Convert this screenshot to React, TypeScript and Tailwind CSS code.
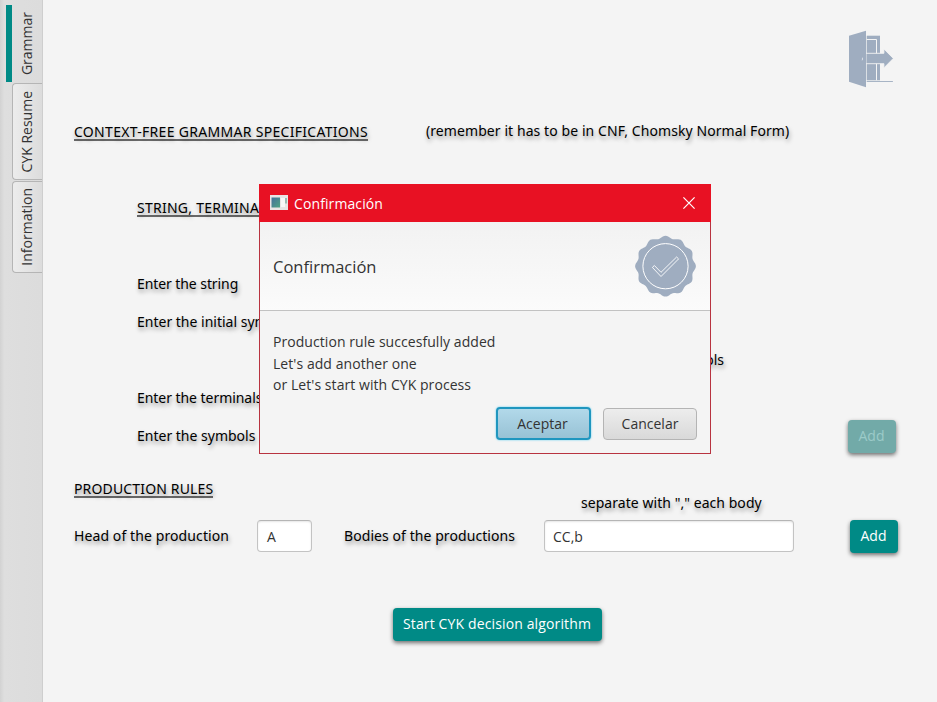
import type { ReactNode } from "react";

function Label({ children, className = "" }: { children: ReactNode; className?: string }) {
  return (
    <span
      className={`whitespace-nowrap font-['Noto_Sans',sans-serif] text-black [text-shadow:1px_3px_4px_rgba(0,0,0,0.4)] ${className}`}
    >
      {children}
    </span>
  );
}

function Heading({ children, className = "" }: { children: ReactNode; className?: string }) {
  return (
    <Label className={className}>
      <span className="inline-block h-[18px] border-b-2 border-[#6a6a6a] leading-[18px]">{children}</span>
    </Label>
  );
}

function Tab({ children, className }: { children: ReactNode; className: string }) {
  return (
    <div className={`flex items-center justify-center pr-0.5 ${className}`}>
      <span className="rotate-180 whitespace-nowrap text-[#333] [writing-mode:vertical-rl]">{children}</span>
    </div>
  );
}

function TealButton({ children, className }: { children: ReactNode; className: string }) {
  return (
    <button
      className={`flex h-[33px] items-center justify-center whitespace-nowrap rounded pb-0.5 pr-px shadow-[0_2px_4px_rgba(0,0,0,0.55)] ${className}`}
    >
      {children}
    </button>
  );
}

function DoorIcon() {
  return (
    <svg width="48" height="60" viewBox="0 0 48 60" fill="#9fadc0">
      <path d="M18.7 5.7H32V50.3H18.7z" />
      <path d="M18.7 9.5H28.5V50.3" fill="none" stroke="#f4f4f4" />
      <path d="M18 23.3h17.9V19l9.4 9.4-9.4 9.5v-4.2H18z" stroke="#f4f4f4" strokeWidth="0.9" />
      <path d="M1 5.7 18 .8v56.5L1 51.7z" />
      <path d="M18.7 51h26.2v.9H18.7z" />
      <path d="M14 27q1.6 2-.1 4z" fill="#fff" />
    </svg>
  );
}

const sealPoints = Array.from({ length: 144 }, (_, i) => {
  const a = (i / 144) * Math.PI * 2;
  const r = 29.2 + 1.2 * Math.cos(12 * a);
  return `${(31.5 + r * Math.sin(a)).toFixed(2)},${(31.2 - r * Math.cos(a)).toFixed(2)}`;
}).join(" ");

function SealIcon() {
  return (
    <svg width="63" height="63" viewBox="0 0 63 63">
      <polygon points={sealPoints} fill="#9fadc0" />
      <g fill="none" stroke="#fff">
        <circle cx="31.5" cy="31.2" r="22.6" strokeWidth="1" />
        <path d="M18.4 32.4l2-1.9 6.6 6.8L42.6 22l2 1.9L27 41.5z" strokeWidth="0.9" strokeLinejoin="round" />
      </g>
    </svg>
  );
}

function ConfirmDialog() {
  return (
    <div className="absolute left-[259px] top-[184px] flex h-[270px] w-[452px] flex-col border border-[#b83340] bg-[#f4f4f4] text-[#333]">
      <div className="-mx-px -mt-px flex h-[38px] shrink-0 items-center bg-[#e81123] pl-[11px] pr-4 text-white">
        <svg width="18" height="15" viewBox="0 0 18 15" className="-mt-0.5">
          <defs>
            <linearGradient id="app" x1="0" y1="0" x2="1" y2="1">
              <stop offset="0" stopColor="#44709a" />
              <stop offset="1" stopColor="#4ea384" />
            </linearGradient>
          </defs>
          <path d="M0 0h18v15H0z" fill="#e9e4e4" />
          <path d="M1.5 2.5h8.5v10H1.5z" fill="url(#app)" />
          <path d="M11 3h4v9h-4z" fill="#f8f8f8" />
          <path d="M15.5 3h1v5.5h-1z" fill="#4c9280" />
        </svg>
        <span className="ml-1.5 flex-1 pt-0.5 leading-5 tracking-[0.1px]">Confirmación</span>
        <svg width="12" height="12" viewBox="0 0 12 12" stroke="#fff" strokeWidth="1.2">
          <path d="M.4.4l11.2 11.2M11.6.4L.4 11.6" />
        </svg>
      </div>
      <div className="flex h-[89px] shrink-0 items-center justify-between border-b border-[#c2c2c2] bg-linear-to-b from-[#f2f2f2] to-[#fbfbfb] px-[13px]">
        <span className="pt-0.5 text-[16.5px]">Confirmación</span>
        <SealIcon />
      </div>
      <div className="pl-[13px] pt-5 leading-[21.5px] tracking-[0.06px]">
        <p>Production rule succesfully added</p>
        <p>Let's add another one</p>
        <p>or Let's start with CYK process</p>
      </div>
      <div className="mt-auto flex justify-end gap-3 pb-[13px] pr-[13px]">
        <button className="h-[33px] w-[95px] rounded border-2 border-[#1f96bf] bg-linear-to-b from-[#b2d9ea] to-[#98c2d5] pr-0.5 shadow-[0_0_2px_#4cc8f0]">
          Aceptar
        </button>
        <button className="mt-px h-8 w-[94px] rounded border border-[#b4b4b4] bg-linear-to-b from-[#ededed] to-[#d9d9d9] pb-0.5">
          Cancelar
        </button>
      </div>
    </div>
  );
}

export default function App() {
  return (
    <div className="relative flex h-[702px] w-[937px] overflow-hidden bg-[#f4f4f4] font-['Open_Sans',sans-serif] text-[14px]">
      <nav className="flex w-[43px] shrink-0 flex-col border-r border-[#cecece] bg-linear-to-r from-[#d2d2d2] via-[#dedede] via-10% to-[#dcdcdc] pt-[5px]">
        <Tab className="ml-1.5 h-[77px] border-l-[6px] border-[#008a86]">Grammar</Tab>
        <Tab className="ml-3 mt-px h-[97px] rounded-l border border-r-0 border-[#b5b5b5] bg-linear-to-r from-[#ececec] to-[#dcdcdc]">
          CYK Resume
        </Tab>
        <Tab className="ml-3 mt-px h-[92px] rounded-l border border-r-0 border-[#b5b5b5] bg-linear-to-r from-[#ececec] to-[#dcdcdc]">
          Information
        </Tab>
      </nav>
      <main className="flex min-w-0 flex-1 flex-col pl-[31px]">
        <div className="flex h-[112px] shrink-0 justify-end pr-[41px] pt-[30px]">
          <DoorIcon />
        </div>
        <div className="flex h-[38px] shrink-0 items-center">
          <Heading className="w-[352px] tracking-[0.3px]">CONTEXT-FREE GRAMMAR SPECIFICATIONS</Heading>
          <Label className="pb-0.5 tracking-[0.08px]">(remember it has to be in CNF, Chomsky Normal Form)</Label>
        </div>
        <div className="mt-[38px] flex h-[38px] shrink-0 items-center pl-[63px]">
          <Heading className="tracking-[0.25px]">STRING, TERMINALS</Heading>
        </div>
        <div className="mt-[38px] flex h-[38px] shrink-0 items-center pl-[63px]">
          <Label className="tracking-[-0.08px]">Enter the string</Label>
        </div>
        <div className="flex h-[38px] shrink-0 items-center pl-[63px]">
          <Label>Enter the initial symbol</Label>
        </div>
        <div className="flex h-[38px] shrink-0 items-center justify-end pr-[213px]">
          <Label>symbols</Label>
        </div>
        <div className="flex h-[38px] shrink-0 items-center pl-[63px]">
          <Label className="tracking-[-0.05px]">Enter the terminals</Label>
        </div>
        <div className="flex h-[38px] shrink-0 items-center justify-between pl-[63px] pr-[41px]">
          <Label>Enter the symbols</Label>
          <TealButton className="mt-0.5 w-12 bg-[#72aaa8] text-[#9ccbc8] shadow-[0_2px_4px_rgba(0,0,0,0.3)]">
            Add
          </TealButton>
        </div>
        <div className="mt-[15px] flex h-[51px] shrink-0">
          <Heading className="w-[507px] pt-[9px] tracking-[0.15px]">PRODUCTION RULES</Heading>
          <Label className="pt-[23px] tracking-[0.05px]">separate with "," each body</Label>
        </div>
        <div className="flex h-8 shrink-0 items-center">
          <Label className="w-[183px] pb-0.5 tracking-[0.1px]">Head of the production</Label>
          <div className="flex h-8 w-[55px] items-center rounded border border-[#c3c3c3] border-t-[#b5b5b5] bg-white pl-[9px] text-[#333] shadow-[inset_0_1px_2px_rgba(0,0,0,0.1)]">
            A
          </div>
          <Label className="ml-8 w-[200px] pb-0.5 tracking-[0.07px]">Bodies of the productions</Label>
          <div className="flex h-8 w-[250px] items-center rounded border border-[#c3c3c3] border-t-[#b5b5b5] bg-white pl-2 text-[#333] shadow-[inset_0_1px_2px_rgba(0,0,0,0.1)]">
            CC,b
          </div>
          <TealButton className="ml-14 w-12 bg-[#008a86] text-white">Add</TealButton>
        </div>
        <TealButton className="ml-[319px] mt-14 w-[209px] shrink-0 bg-[#008a86] tracking-[0.13px] text-white">
          Start CYK decision algorithm
        </TealButton>
      </main>
      <ConfirmDialog />
    </div>
  );
}
